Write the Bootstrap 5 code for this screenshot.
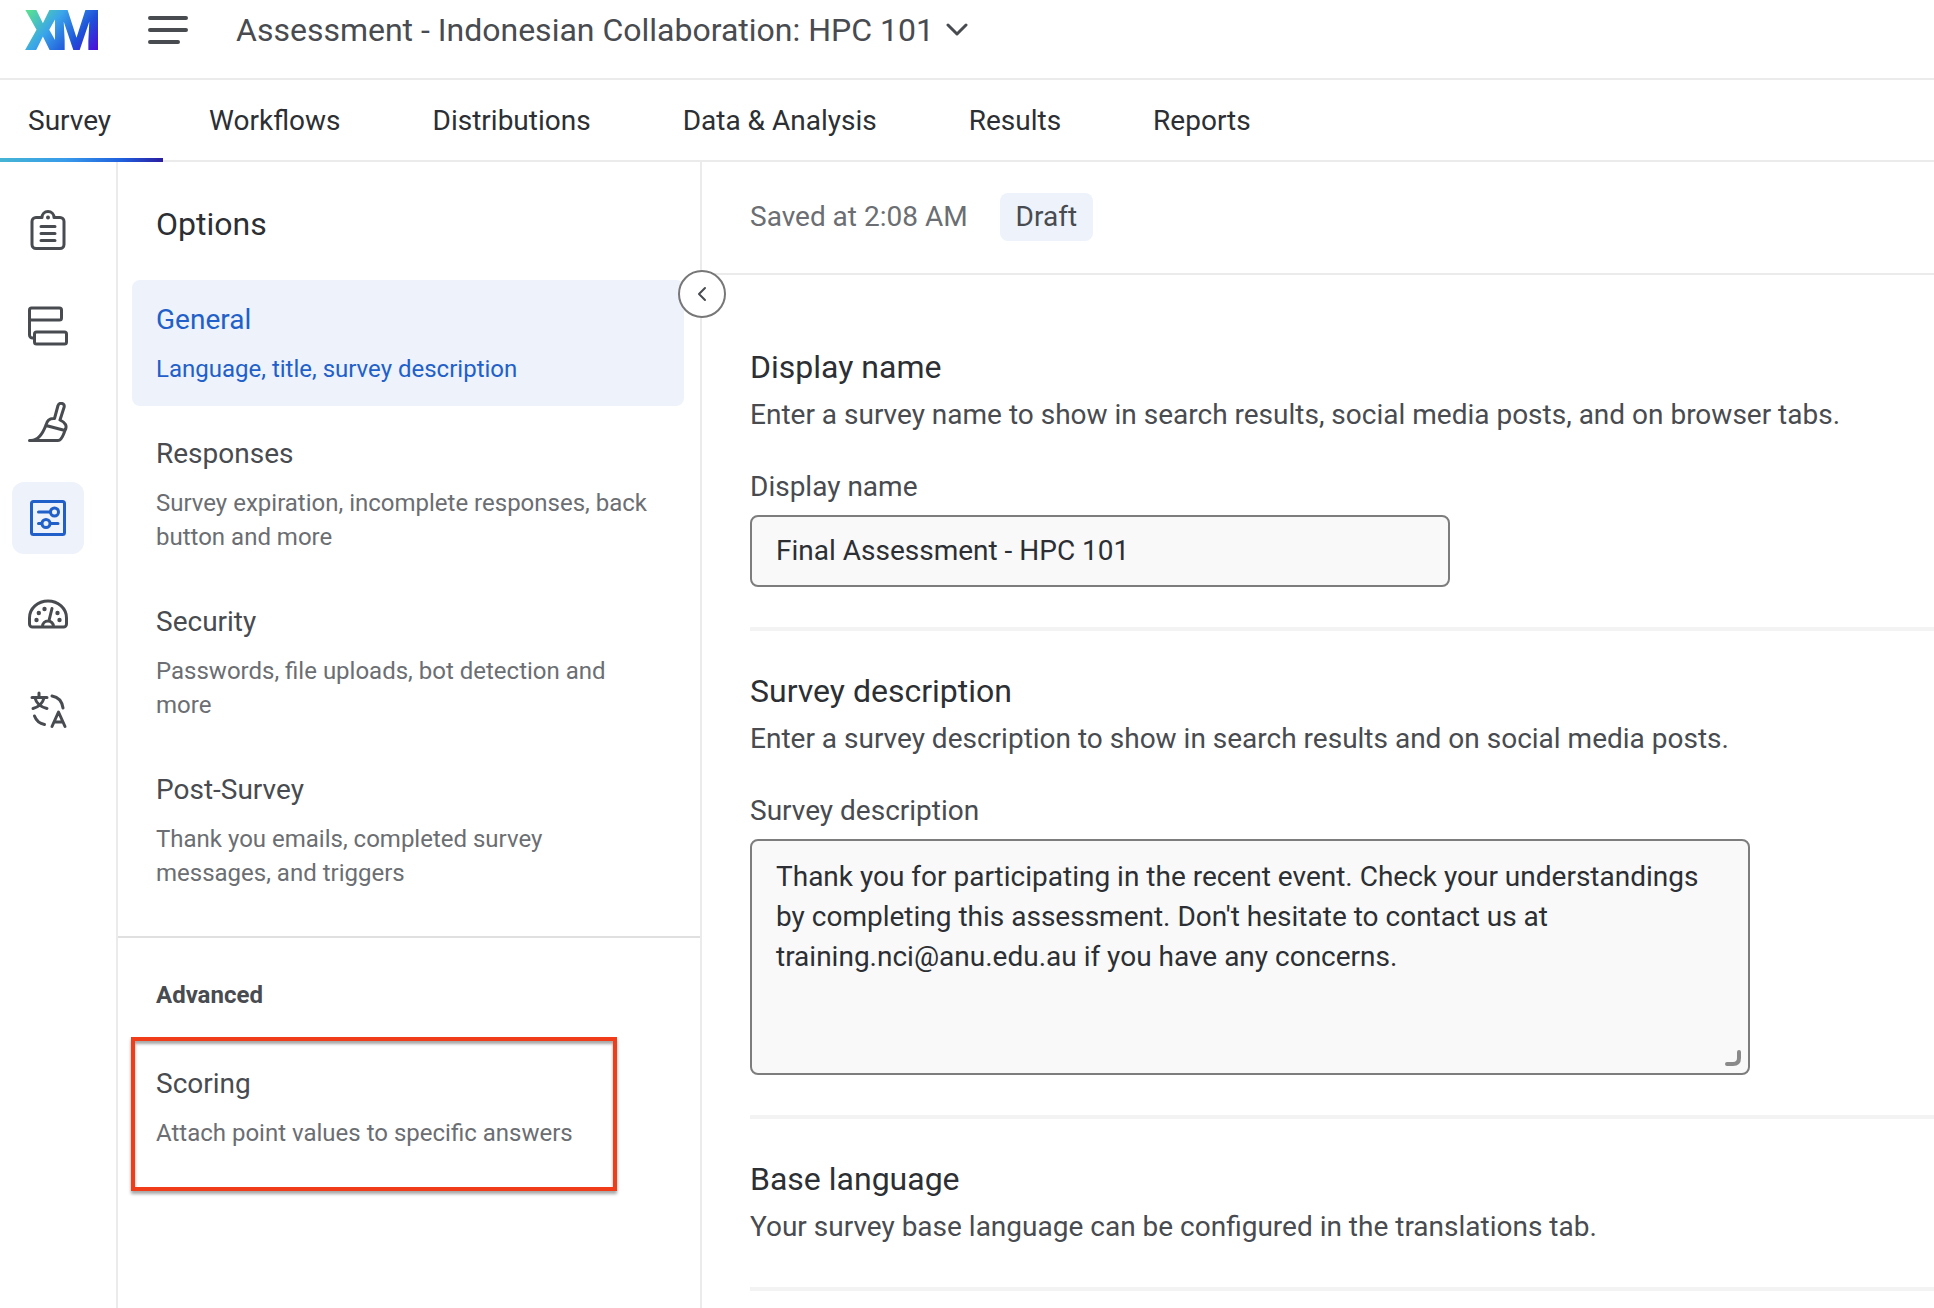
<!DOCTYPE html>
<html lang="en">
<head>
<meta charset="utf-8">
<meta name="viewport" content="width=device-width, initial-scale=1">
<title>Survey options</title>
<link href="https://cdn.jsdelivr.net/npm/bootstrap@5.3.0/dist/css/bootstrap.min.css" rel="stylesheet">
<style>
  :root {
    --ink: #2c2f33;
    --ink-mid: #484b50;
    --ink-soft: #6b6e72;
    --line: #ebebeb;
    --tint: #edf2fb;
    --accent: #215fc9;
  }
  body { font-family: Roboto, "Liberation Sans", sans-serif; font-size: 28px; line-height: 40px; color: var(--ink); background: #fff; }
  a { text-decoration: none; color: inherit; }
  svg { display: block; }

  .topbar { height: 80px; padding: 0 24px 18px; border-bottom: 2px solid var(--line); }
  .burger { margin: 0 48px; }
  .project-btn { font-size: 32px; color: var(--ink-mid); gap: 12px; }

  .tabs { height: 82px; border-bottom: 2px solid var(--line); }
  .tabs .nav-link { color: var(--ink); padding: 21px 46px 0; height: 82px; }
  .tabs .nav-item:first-child .nav-link { padding-left: 28px; padding-right: 52px; }
  .tabs .nav-link.active { background: linear-gradient(90deg, #45b5d4, #389bea 40%, #1f5fdd 75%, #2a1da0) bottom / 100% 4px no-repeat; }

  .rail { width: 118px; padding: 32px 12px; gap: 24px; border-right: 2px solid var(--line); }
  .rail a { width: 72px; height: 72px; border-radius: 12px; color: var(--ink-mid); }
  .rail a.current { background: var(--tint); color: var(--accent); }

  .side { width: 584px; border-right: 2px solid var(--line); }
  .side-title { font-size: 32px; line-height: 44px; padding: 40px 38px 34px; }
  .side-list { padding: 0 16px 0 14px; gap: 8px; }
  .side-item { padding: 20px 24px; border-radius: 8px; }
  .side-name { color: var(--ink-mid); margin-bottom: 12px; }
  .side-note { font-size: 24px; line-height: 34px; color: var(--ink-soft); }
  .side-item.current, .side-item.current span { background: var(--tint); color: var(--accent); }
  .side-sep { height: 2px; background: #e0e0e0; margin: 26px 0 40px; }
  .side-group { font-size: 24px; line-height: 34px; font-weight: 700; color: var(--ink-mid); padding: 0 38px; margin: 0 0 32px; }
  .callout { inset: -7px 67px -21px -1px; border: 4px solid #f03c19; box-shadow: 0 3px 3px rgba(0,0,0,.35), inset 0 3px 3px rgba(0,0,0,.35); pointer-events: none; }
  .fold { top: 108px; right: -26px; width: 48px; height: 48px; border: 2px solid #777; background: #fff; color: var(--ink-mid); z-index: 2; }

  .status { height: 113px; padding: 0 48px 2px; gap: 32px; border-bottom: 2px solid var(--line); color: var(--ink-soft); }
  .draft { padding: 4px 16px; border-radius: 8px; background: var(--tint); color: var(--ink-mid); }
  .pane { padding-left: 48px; }
  .block { padding: 40px 0; border-bottom: 4px solid #f3f3f3; }
  .block:first-child { padding-top: 72px; }
  .block h2 { font-size: 32px; line-height: 40px; font-weight: 400; margin-bottom: 8px; }
  .block p, .block label { color: var(--ink-mid); margin: 0; }
  .block label { display: block; margin: 32px 0 8px; }
  .block .form-control { font-size: 28px; line-height: 40px; color: var(--ink); background: #f9f9f9; border: 2px solid #7d7d7d; border-radius: 8px; padding: 14px 24px; resize: none; }
  .name-field { max-width: 700px; }
  .desc-field { max-width: 1000px; }
  .desc-field .form-control { height: 236px; padding-top: 16px; }
  .grip { right: 9px; bottom: 9px; }
</style>
<script src="https://cdn.jsdelivr.net/npm/bootstrap@5.3.0/dist/js/bootstrap.bundle.min.js"></script>
</head>
<body class="d-flex flex-column min-vh-100">

<header class="topbar d-flex align-items-center">
  <a href="#" aria-label="XM home">
    <svg width="76" height="60" viewBox="0 0 76 60" overflow="visible">
      <defs><linearGradient id="xm" gradientUnits="userSpaceOnUse" x1="8" y1="8" x2="66" y2="56">
        <stop offset="0" stop-color="#57dd96"/><stop offset=".35" stop-color="#3aa5ea"/><stop offset=".72" stop-color="#1d50d8"/><stop offset="1" stop-color="#4b10d8"/>
      </linearGradient></defs>
      <text y="50" font-family="Roboto, sans-serif" font-weight="900" font-size="56" fill="url(#xm)"><tspan x="1">X</tspan><tspan x="28">M</tspan></text>
    </svg>
  </a>
  <button class="burger btn p-0 border-0" type="button" aria-label="Menu">
    <svg width="40" height="30" viewBox="0 0 40 30" stroke="#484b50" stroke-width="4" stroke-linecap="round"><path d="M2 3h36M2 15h36M2 27h28"/></svg>
  </button>
  <button class="project-btn btn p-0 border-0 d-flex align-items-center" type="button">
    Assessment - Indonesian Collaboration: HPC 101
    <svg width="22" height="14" viewBox="0 0 22 14" fill="none" stroke="currentColor" stroke-width="3" stroke-linecap="round" stroke-linejoin="round"><path d="M2 2l9 9 9-9"/></svg>
  </button>
</header>

<nav class="tabs">
  <ul class="nav flex-nowrap">
    <li class="nav-item"><a class="nav-link active" href="#">Survey</a></li>
    <li class="nav-item"><a class="nav-link" href="#">Workflows</a></li>
    <li class="nav-item"><a class="nav-link" href="#">Distributions</a></li>
    <li class="nav-item"><a class="nav-link text-nowrap" href="#">Data &amp; Analysis</a></li>
    <li class="nav-item"><a class="nav-link" href="#">Results</a></li>
    <li class="nav-item"><a class="nav-link" href="#">Reports</a></li>
  </ul>
</nav>

<div class="d-flex flex-grow-1">
  <nav class="rail d-flex flex-column flex-shrink-0" aria-label="Survey tools">
    <a class="d-flex align-items-center justify-content-center" href="#" aria-label="Survey builder">
      <svg width="40" height="40" viewBox="0 0 40 40" fill="none" stroke="currentColor" stroke-width="3" stroke-linecap="round" stroke-linejoin="round"><path d="M14 7.500H8a4 4 0 0 0-4 4V34.500a4 4 0 0 0 4 4H32a4 4 0 0 0 4-4V11.500a4 4 0 0 0-4-4H26C26 4 23.500 1.500 20 1.500S14 4 14 7.500z"/><path d="M13 16.500H27M13 23.500H27M13 30.500H27"/><circle cx="20" cy="7.500" r="2" fill="currentColor" stroke="none"/></svg>
    </a>
    <a class="d-flex align-items-center justify-content-center" href="#" aria-label="Survey flow">
      <svg width="40" height="40" viewBox="0 0 40 40" fill="none" stroke="currentColor" stroke-width="3" stroke-linejoin="round"><rect x="1.500" y="2" width="32" height="12" rx="2"/><rect x="6.500" y="26" width="32" height="12" rx="2"/><path d="M1.500 12V29a3 3 0 0 0 3 3H7"/></svg>
    </a>
    <a class="d-flex align-items-center justify-content-center" href="#" aria-label="Look and feel">
      <svg width="40" height="40" viewBox="0 0 40 40" fill="none" stroke="currentColor" stroke-width="3" stroke-linecap="round" stroke-linejoin="round"><path d="M1.500 38.500H30C34 38.500 35.500 32 37 28.500C39.500 24 37.500 20.500 32 18L36 5.500C37.500 1 31.500 0 30 3.500L26.500 16.500C21 16 19 18.500 18 23C15 31 11 38.500 3 38.500M18 23.500L37 28.500"/></svg>
    </a>
    <a class="current d-flex align-items-center justify-content-center" href="#" aria-label="Survey options">
      <svg width="40" height="40" viewBox="0 0 40 40" fill="none" stroke="currentColor" stroke-width="3" stroke-linecap="round"><rect x="3.500" y="3.500" width="33" height="33" rx="2"/><path d="M10.500 14H22M10.500 25.500H13.500M22.500 25.500H30"/><circle cx="26.500" cy="14" r="4"/><circle cx="18" cy="25.500" r="4"/></svg>
    </a>
    <a class="d-flex align-items-center justify-content-center" href="#" aria-label="Quotas">
      <svg width="40" height="40" viewBox="0 0 40 40" fill="none" stroke="currentColor" stroke-width="3" stroke-linecap="round" stroke-linejoin="round"><path d="M1.500 24a18.500 17 0 0 1 37 0V30a3 3 0 0 1-3 3H4.500a3 3 0 0 1-3-3zM14.500 32.500a5.500 5.500 0 0 1 11 0M21 26.500L24 14.500"/><g fill="currentColor" stroke="none"><circle cx="8.500" cy="26" r="2.200"/><circle cx="10.800" cy="19" r="2.200"/><circle cx="16.500" cy="15" r="2.200"/><circle cx="29.500" cy="19" r="2.200"/><circle cx="31.500" cy="26" r="2.200"/></g></svg>
    </a>
    <a class="d-flex align-items-center justify-content-center" href="#" aria-label="Translations">
      <svg width="40" height="40" viewBox="0 0 40 40" fill="none" stroke="currentColor" stroke-width="3" stroke-linecap="round" stroke-linejoin="round"><path d="M4 7.500H19M11 3V7M5 18.500Q14 16 16 8M19 18.500Q9 16 7 8M24 6C30 7 34 11 35 18M6.500 26C8 30 11.500 33.500 16.500 34.500M24 36.500L30.500 22L37 36.500M26.500 32H34.500"/></svg>
    </a>
  </nav>

  <aside class="side flex-shrink-0 position-relative">
    <h1 class="side-title fw-normal m-0">Options</h1>
    <div class="side-list d-flex flex-column">
      <a class="side-item current d-flex flex-column" href="#"><span class="side-name">General</span><span class="side-note">Language, title, survey description</span></a>
      <a class="side-item d-flex flex-column" href="#"><span class="side-name">Responses</span><span class="side-note">Survey expiration, incomplete responses, back button and more</span></a>
      <a class="side-item d-flex flex-column" href="#"><span class="side-name">Security</span><span class="side-note">Passwords, file uploads, bot detection and more</span></a>
      <a class="side-item d-flex flex-column" href="#"><span class="side-name">Post-Survey</span><span class="side-note">Thank you emails, completed survey messages, and triggers</span></a>
    </div>
    <div class="side-sep"></div>
    <h2 class="side-group">Advanced</h2>
    <div class="side-list d-flex flex-column">
      <a class="side-item d-flex flex-column position-relative" href="#"><span class="side-name">Scoring</span><span class="side-note">Attach point values to specific answers</span><span class="callout position-absolute"></span></a>
    </div>
    <button class="fold btn rounded-circle p-0 position-absolute d-flex align-items-center justify-content-center" type="button" aria-label="Collapse options">
      <svg width="10" height="16" viewBox="0 0 10 16" fill="none" stroke="currentColor" stroke-width="2" stroke-linecap="round" stroke-linejoin="round"><path d="M8 2L2 8l6 6"/></svg>
    </button>
  </aside>

  <main class="flex-grow-1">
    <div class="status d-flex align-items-center">
      <span>Saved at 2:08 AM</span>
      <span class="draft">Draft</span>
    </div>
    <div class="pane">
      <section class="block">
        <h2>Display name</h2>
        <p>Enter a survey name to show in search results, social media posts, and on browser tabs.</p>
        <label for="name">Display name</label>
        <input class="form-control name-field" id="name" type="text" value="Final Assessment - HPC 101">
      </section>
      <section class="block">
        <h2>Survey description</h2>
        <p>Enter a survey description to show in search results and on social media posts.</p>
        <label for="desc">Survey description</label>
        <div class="desc-field position-relative">
          <textarea class="form-control d-block" id="desc">Thank you for participating in the recent event. Check your understandings by completing this assessment. Don't hesitate to contact us at training.nci@anu.edu.au if you have any concerns.</textarea>
          <svg class="grip position-absolute" width="16" height="16" viewBox="0 0 16 16" fill="none" stroke="#8a8a8a" stroke-width="4" stroke-linecap="round"><path d="M14 2V8Q14 14 8 14H2"/></svg>
        </div>
      </section>
      <section class="block">
        <h2>Base language</h2>
        <p>Your survey base language can be configured in the translations tab.</p>
      </section>
    </div>
  </main>
</div>
</body>
</html>
